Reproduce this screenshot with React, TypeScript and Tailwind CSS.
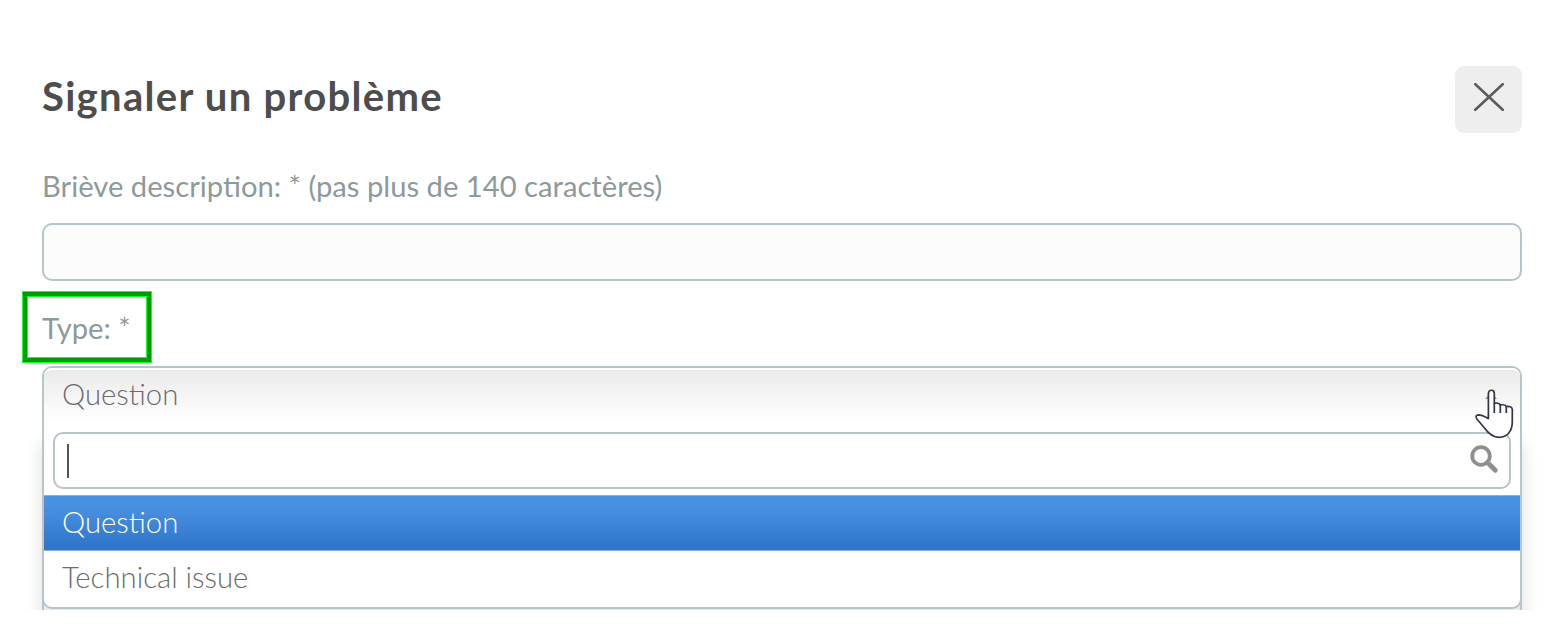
const options = ["Question", "Technical issue"];

const CloseIcon = () => (
  <svg width="30" height="28" viewBox="0 0 30 28" fill="none" stroke="#5c5c5c" strokeWidth="2.6" strokeLinecap="round">
    <path d="M1.3 1.2 28.7 26.8M28.7 1.2 1.3 26.8" />
  </svg>
);

const SearchIcon = () => (
  <svg width="29" height="30" viewBox="0 0 29 30" fill="none" stroke="#8f8f8f">
    <circle cx="11" cy="11" r="8.8" strokeWidth="3.8" />
    <path d="m17.5 17.5 7.8 7.8" strokeWidth="4.8" strokeLinecap="round" />
  </svg>
);

const HandCursor = () => (
  <svg
    className="absolute top-[20px] left-[1431px] z-10"
    width="40"
    height="51"
    viewBox="0 0 40 51"
    fill="none"
  >
    <path d="m10 11 6-7 6 7z" fill="#999" />
    <path
      d="M13.4 30.5V5.4c0-4.2 5.9-4.2 5.9 0v9.8c2.4-.6 5.2.2 6 1.8 2.4-.5 5.2.2 6 1.5 2.6-.6 6 .1 6 3V34c0 9.5-5.6 15.3-13 15.3-6.4 0-10.6-3.3-14.8-9.3L2.1 31.2C.4 28.6 1 27 3.4 26.9c3.400 0 6.600 1.800 10 3.600z"
      fill="#fff"
      stroke="#33334b"
      strokeWidth="1.7"
      strokeLinejoin="round"
    />
    <path d="M19.300 15.200V25M25.300 17v8M31.300 18.500V25" stroke="#33334b" strokeWidth="1.700" />
  </svg>
);

const TypeSelect = () => (
  <div className="relative isolate">
    {/* only the opened list casts a shadow, not the select itself */}
    <div className="absolute inset-x-0 top-[72px] -bottom-[12px] -z-10 border-x-2 border-[#b8c4c9] bg-[#e6eaeb] shadow-[0_6px_16px_rgba(0,0,0,0.14)]" />
    <div className="h-[243px] rounded-[10px] border-2 border-[#b8c4c9] bg-white">
      <div className="flex h-[64px] items-center rounded-t-lg border-t-2 border-white bg-linear-to-b from-[#eaeaea] to-white to-80% pb-[15px] pl-[18px] text-[29.3px] font-light text-[#6c6c6c]">
        Question
      </div>
      <div className="mr-[9px] ml-[9px] flex h-[57px] items-center justify-between rounded-[10px] border-2 border-[#b8c4c9] bg-white pr-[10px] pl-[12px]">
        <span className="h-[34px] w-[2px] bg-[#555]" />
        <div className="pb-[2px]">
          <SearchIcon />
        </div>
      </div>
      <ul className="mt-[6px] text-[29.3px] font-light text-[#6c6c6c]">
        {options.map((option, i) => (
          <li
            key={option}
            className={
              i === 0
                ? "flex h-[56px] items-center border-y border-[#83b2e6] bg-linear-to-b from-[#4a90e2] from-20% to-[#3077cb] to-90% pb-[2px] pl-[18px] text-white"
                : "flex h-[54px] items-center pb-[2px] pl-[18px]"
            }
          >
            {option}
          </li>
        ))}
      </ul>
    </div>
    <div className="absolute top-[2px] left-[2px]">
      <HandCursor />
    </div>
  </div>
);

const App = () => {
  return (
    <div className="h-[629px] bg-white font-['Lato',sans-serif]">
      <div className="flex h-[610px] flex-col overflow-hidden pt-[66px] pr-[35px] pl-[42px]">
        <header className="flex h-[67px] items-start justify-between">
          <h1 className="text-[40px] leading-[60px] font-bold tracking-[1.3px] text-[#4d4d4d]">
            Signaler un problème
          </h1>
          <button className="flex h-[67px] w-[67px] items-center justify-center rounded-[9px] bg-[#eee] pb-[5px]">
            <CloseIcon />
          </button>
        </header>
        <label className="mt-[35px] h-[55px] text-[29.2px] leading-[36px] text-[#8d9a9a]">
          Briève description: * (pas plus de 140 caractères)
        </label>
        <input className="h-[58px] shrink-0 rounded-[10px] border-2 border-[#b8c4c9] bg-[#fcfcfc]" />
        <div className="mt-[10px] -ml-[20px] h-[72px] w-[130px] shrink-0 border border-[#1f2]">
          <div className="h-full border-4 border-[#00990a]">
            <div className="flex h-full items-center border border-[#1f2] pt-px pl-[14px] text-[29.2px] text-[#8d9a9a]">
              Type: *
            </div>
          </div>
        </div>
        <div className="mt-[3px] shrink-0">
          <TypeSelect />
        </div>
      </div>
    </div>
  );
};

export default App;
